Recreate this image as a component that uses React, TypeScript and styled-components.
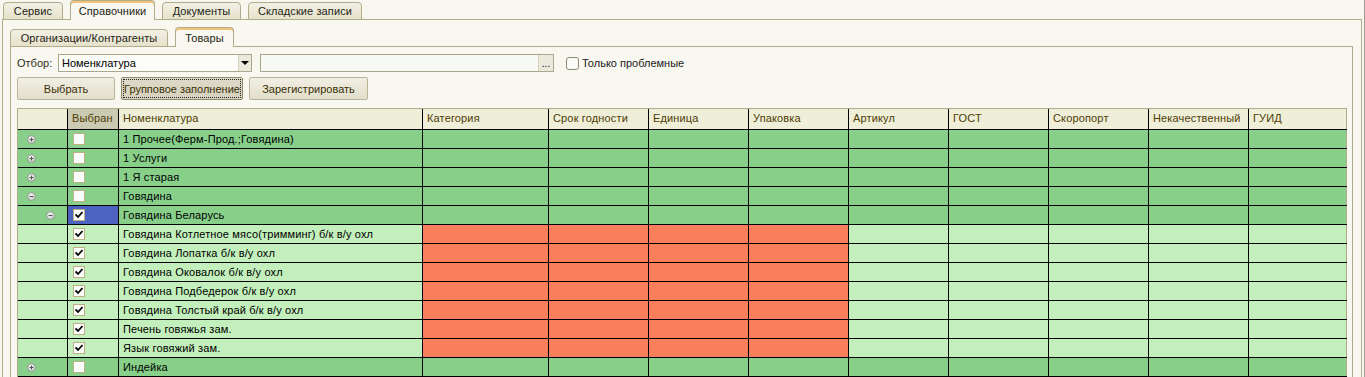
import React from "react";
import styled, { createGlobalStyle } from "styled-components";

const GlobalStyle = createGlobalStyle`
  html, body {
    margin: 0;
    padding: 0;
    background: #f7f6ef;
    overflow: hidden;
  }
  body {
    font-family: "Liberation Sans", Arial, sans-serif;
    font-size: 11px;
    color: #000;
  }
`;

const COLUMNS = "50px 51px 304px 126px repeat(7, 100px) 98px";
const FRAME = "#b0ab88";

const Window = styled.div`
  height: 377px;
  box-sizing: border-box;
  padding: 0 2px 0 2px;
  border-right: 1px solid #9c9c94;
  display: flex;
  flex-direction: column;
`;

const TabStrip = styled.div<{ $indent?: number }>`
  position: relative;
  z-index: 1;
  display: flex;
  align-items: flex-end;
  gap: 7px;
  height: 20px;
  margin-bottom: -1px;
  padding-left: ${(p) => p.$indent ?? 0}px;
`;

const Tab = styled.div<{ $active?: boolean; $width: number }>`
  box-sizing: border-box;
  width: ${(p) => p.$width}px;
  height: ${(p) => (p.$active ? 20 : 18)}px;
  display: flex;
  align-items: center;
  justify-content: center;
  padding-top: ${(p) => (p.$active ? 1 : 0)}px;
  border: 1px solid ${FRAME};
  border-bottom: ${(p) => (p.$active ? "none" : `1px solid ${FRAME}`)};
  border-radius: 4px 4px 0 0;
  background: ${(p) =>
    p.$active ? "#f8f7f0" : "linear-gradient(#f3f1e6, #e5e1ca)"};
  box-shadow: ${(p) => (p.$active ? "inset 0 2px 0 #f1c37a" : "none")};
  color: #242414;
  white-space: nowrap;
  letter-spacing: 0.1px;
`;

const Panel = styled.div<{ $pad: string }>`
  flex: 1;
  display: flex;
  flex-direction: column;
  border: 1px solid ${FRAME};
  border-bottom: none;
  background: #f8f7f0;
  padding: ${(p) => p.$pad};
  min-height: 0;
`;

const FilterRow = styled.div`
  display: flex;
  align-items: center;
  height: 18px;
`;

const Label = styled.span`
  width: 41px;
  color: #2e2e22;
`;

const Field = styled.div<{ $width: number; $tint?: string; $gap?: number }>`
  box-sizing: border-box;
  width: ${(p) => p.$width}px;
  height: 18px;
  display: flex;
  margin-left: ${(p) => p.$gap ?? 0}px;
  border: 1px solid #a9a78e;
  background: ${(p) => p.$tint ?? "#fcfcf8"};
`;

const FieldText = styled.span`
  flex: 1;
  padding-left: 3px;
  line-height: 16px;
`;

const FieldButton = styled.div<{ $width: number }>`
  width: ${(p) => p.$width}px;
  display: flex;
  align-items: center;
  justify-content: center;
  background: #ebe9dc;
  border-left: 1px solid #d4d1bd;
  font-size: 10px;
  line-height: 1;
  padding-top: 2px;
  box-sizing: border-box;
`;

const Arrow = styled.span`
  width: 0;
  height: 0;
  border-left: 4px solid transparent;
  border-right: 4px solid transparent;
  border-top: 4px solid #000;
  margin-top: -2px;
`;

const CheckLabel = styled.label`
  display: flex;
  align-items: center;
  gap: 3px;
  margin-left: 12px;
  color: #222;
`;

const RoundBox = styled.span`
  box-sizing: border-box;
  width: 13px;
  height: 13px;
  border: 1px solid #8d8a75;
  border-radius: 3px;
  background: #fbfbf6;
`;

const ButtonRow = styled.div`
  display: flex;
  gap: 6px;
  margin-top: 5px;
  height: 23px;
`;

const Button = styled.div<{ $width: number; $focused?: boolean }>`
  position: relative;
  box-sizing: border-box;
  width: ${(p) => p.$width}px;
  height: 23px;
  display: flex;
  align-items: center;
  justify-content: center;
  border: 1px solid ${(p) => (p.$focused ? "#8f8a6c" : "#b9b497")};
  border-radius: 2px;
  background: ${(p) =>
    p.$focused
      ? "linear-gradient(#dedaca, #d6d1bd)"
      : "linear-gradient(#f1efe4, #e2decb)"};
  color: #3a2f05;
  white-space: nowrap;
  &::after {
    content: "";
    display: ${(p) => (p.$focused ? "block" : "none")};
    position: absolute;
    inset: 1px;
    border: 1px dotted #222;
  }
`;

const Grid = styled.div`
  margin-top: 8px;
  width: 1330px;
  box-sizing: border-box;
  border-top: 1px solid ${FRAME};
  border-left: 1px solid ${FRAME};
`;

const Row = styled.div<{ $height: number }>`
  display: grid;
  grid-template-columns: ${COLUMNS};
  height: ${(p) => p.$height}px;
  box-sizing: border-box;
  border-bottom: 1px solid #000;
`;

const HeadCell = styled.div<{ $bg?: string; $last?: boolean }>`
  box-sizing: border-box;
  background: ${(p) => p.$bg ?? "#efeed8"};
  border-right: 1px solid ${(p) => (p.$last ? FRAME : "#000")};
  padding: 3px 0 0 4px;
  color: #4d3d05;
  white-space: nowrap;
  overflow: hidden;
  letter-spacing: 0.15px;
`;

const Cell = styled.div<{ $bg: string; $last?: boolean }>`
  box-sizing: border-box;
  background: ${(p) => p.$bg};
  border-right: 1px solid ${(p) => (p.$last ? FRAME : "#000")};
  display: flex;
  align-items: center;
  padding-left: 4px;
  white-space: nowrap;
  overflow: hidden;
  letter-spacing: 0.15px;
`;

const TreeCell = styled.div<{ $bg: string; $level: number }>`
  box-sizing: border-box;
  background: ${(p) => p.$bg};
  border-right: 1px solid #000;
  display: flex;
  align-items: center;
  padding-left: ${(p) => 9 + p.$level * 19}px;
`;

const CheckCell = styled.div<{ $bg: string }>`
  box-sizing: border-box;
  background: ${(p) => p.$bg};
  border-right: 1px solid #000;
  display: flex;
  align-items: center;
  padding-left: 5px;
`;

const Box = styled.span`
  box-sizing: border-box;
  width: 12px;
  height: 12px;
  border: 1px solid #bfae86;
  background: #fbfdfb;
  display: flex;
  align-items: center;
  justify-content: center;
`;

const DARK = "#88d08a";
const LIGHT = "#c2efbb";
const ORANGE = "#f97e5b";
const SELECTED = "#4c64bf";

type Item = {
  name: string;
  level: number;
  group: boolean;
  expanded?: boolean;
  checked: boolean;
  selected?: boolean;
  problem?: boolean;
};

const items: Item[] = [
  { name: "1 Прочее(Ферм-Прод.;Говядина)", level: 0, group: true, checked: false },
  { name: "1 Услуги", level: 0, group: true, checked: false },
  { name: "1 Я старая", level: 0, group: true, checked: false },
  { name: "Говядина", level: 0, group: true, expanded: true, checked: false },
  { name: "Говядина Беларусь", level: 1, group: true, expanded: true, checked: true, selected: true },
  { name: "Говядина Котлетное мясо(тримминг) б/к в/у охл", level: 2, group: false, checked: true, problem: true },
  { name: "Говядина Лопатка б/к в/у охл", level: 2, group: false, checked: true, problem: true },
  { name: "Говядина Оковалок б/к в/у охл", level: 2, group: false, checked: true, problem: true },
  { name: "Говядина Подбедерок б/к в/у охл", level: 2, group: false, checked: true, problem: true },
  { name: "Говядина Толстый край б/к в/у охл", level: 2, group: false, checked: true, problem: true },
  { name: "Печень говяжья зам.", level: 2, group: false, checked: true, problem: true },
  { name: "Язык говяжий зам.", level: 2, group: false, checked: true, problem: true },
  { name: "Индейка", level: 0, group: true, checked: false },
];

const headers = [
  "Категория",
  "Срок годности",
  "Единица",
  "Упаковка",
  "Артикул",
  "ГОСТ",
  "Скоропорт",
  "Некачественный",
  "ГУИД",
];

const ExpandIcon: React.FC<{ expanded?: boolean }> = ({ expanded }) => (
  <svg width="9" height="9" viewBox="0 0 9 9">
    <defs>
      <radialGradient id="knob" cx="0.4" cy="0.35" r="0.7">
        <stop offset="0" stopColor="#f2f5f2" />
        <stop offset="1" stopColor="#c3cbc3" />
      </radialGradient>
    </defs>
    <circle cx="4.5" cy="4.5" r="4" fill="url(#knob)" stroke="#8e9a8e" />
    <line x1="2.5" y1="4.5" x2="6.5" y2="4.5" stroke="#4c584c" />
    {!expanded && <line x1="4.5" y1="2.5" x2="4.5" y2="6.5" stroke="#4c584c" />}
  </svg>
);

const Tick: React.FC = () => (
  <svg width="8" height="8" viewBox="0 0 8 8">
    <path d="M0.5 3.5 L3 6 L7.5 1" fill="none" stroke="#000" strokeWidth="1.8" />
  </svg>
);

const ItemRow: React.FC<{ item: Item }> = ({ item }) => {
  const bg = item.group ? DARK : LIGHT;
  return (
    <Row $height={19}>
      <TreeCell $bg={bg} $level={item.level}>
        {item.group ? <ExpandIcon expanded={item.expanded} /> : null}
      </TreeCell>
      <CheckCell $bg={item.selected ? SELECTED : bg}>
        <Box>{item.checked ? <Tick /> : null}</Box>
      </CheckCell>
      <Cell $bg={bg}>{item.name}</Cell>
      {headers.map((h, i) => (
        <Cell
          key={h}
          $bg={item.problem && i < 4 ? ORANGE : bg}
          $last={i === headers.length - 1}
        />
      ))}
    </Row>
  );
};

const App: React.FC = () => {
  return (
    <>
      <GlobalStyle />
      <Window>
        <TabStrip $indent={1}>
          <Tab $width={60}>Сервис</Tab>
          <Tab $width={85} $active>
            Справочники
          </Tab>
          <Tab $width={79}>Документы</Tab>
          <Tab $width={114}>Складские записи</Tab>
        </TabStrip>
        <Panel $pad="7px 8px 0 7px">
          <TabStrip>
            <Tab $width={158}>Организации/Контрагенты</Tab>
            <Tab $width={59} $active>
              Товары
            </Tab>
          </TabStrip>
          <Panel $pad="7px 6px 0 6px">
            <FilterRow>
              <Label>Отбор:</Label>
              <Field $width={194}>
                <FieldText>Номенклатура</FieldText>
                <FieldButton $width={13}>
                  <Arrow />
                </FieldButton>
              </Field>
              <Field $width={294} $tint="#f7faf4" $gap={8}>
                <FieldText />
                <FieldButton $width={15}>...</FieldButton>
              </Field>
              <CheckLabel>
                <RoundBox />
                Только проблемные
              </CheckLabel>
            </FilterRow>
            <ButtonRow>
              <Button $width={98}>Выбрать</Button>
              <Button $width={122} $focused>
                Групповое заполнение
              </Button>
              <Button $width={119}>Зарегистрировать</Button>
            </ButtonRow>
            <Grid>
              <Row $height={21}>
                <HeadCell />
                <HeadCell $bg="#cbcab2">Выбран</HeadCell>
                <HeadCell>Номенклатура</HeadCell>
                {headers.map((h, i) => (
                  <HeadCell key={h} $last={i === headers.length - 1}>
                    {h}
                  </HeadCell>
                ))}
              </Row>
              {items.map((item) => (
                <ItemRow key={item.name} item={item} />
              ))}
            </Grid>
          </Panel>
        </Panel>
      </Window>
    </>
  );
};

export default App;
